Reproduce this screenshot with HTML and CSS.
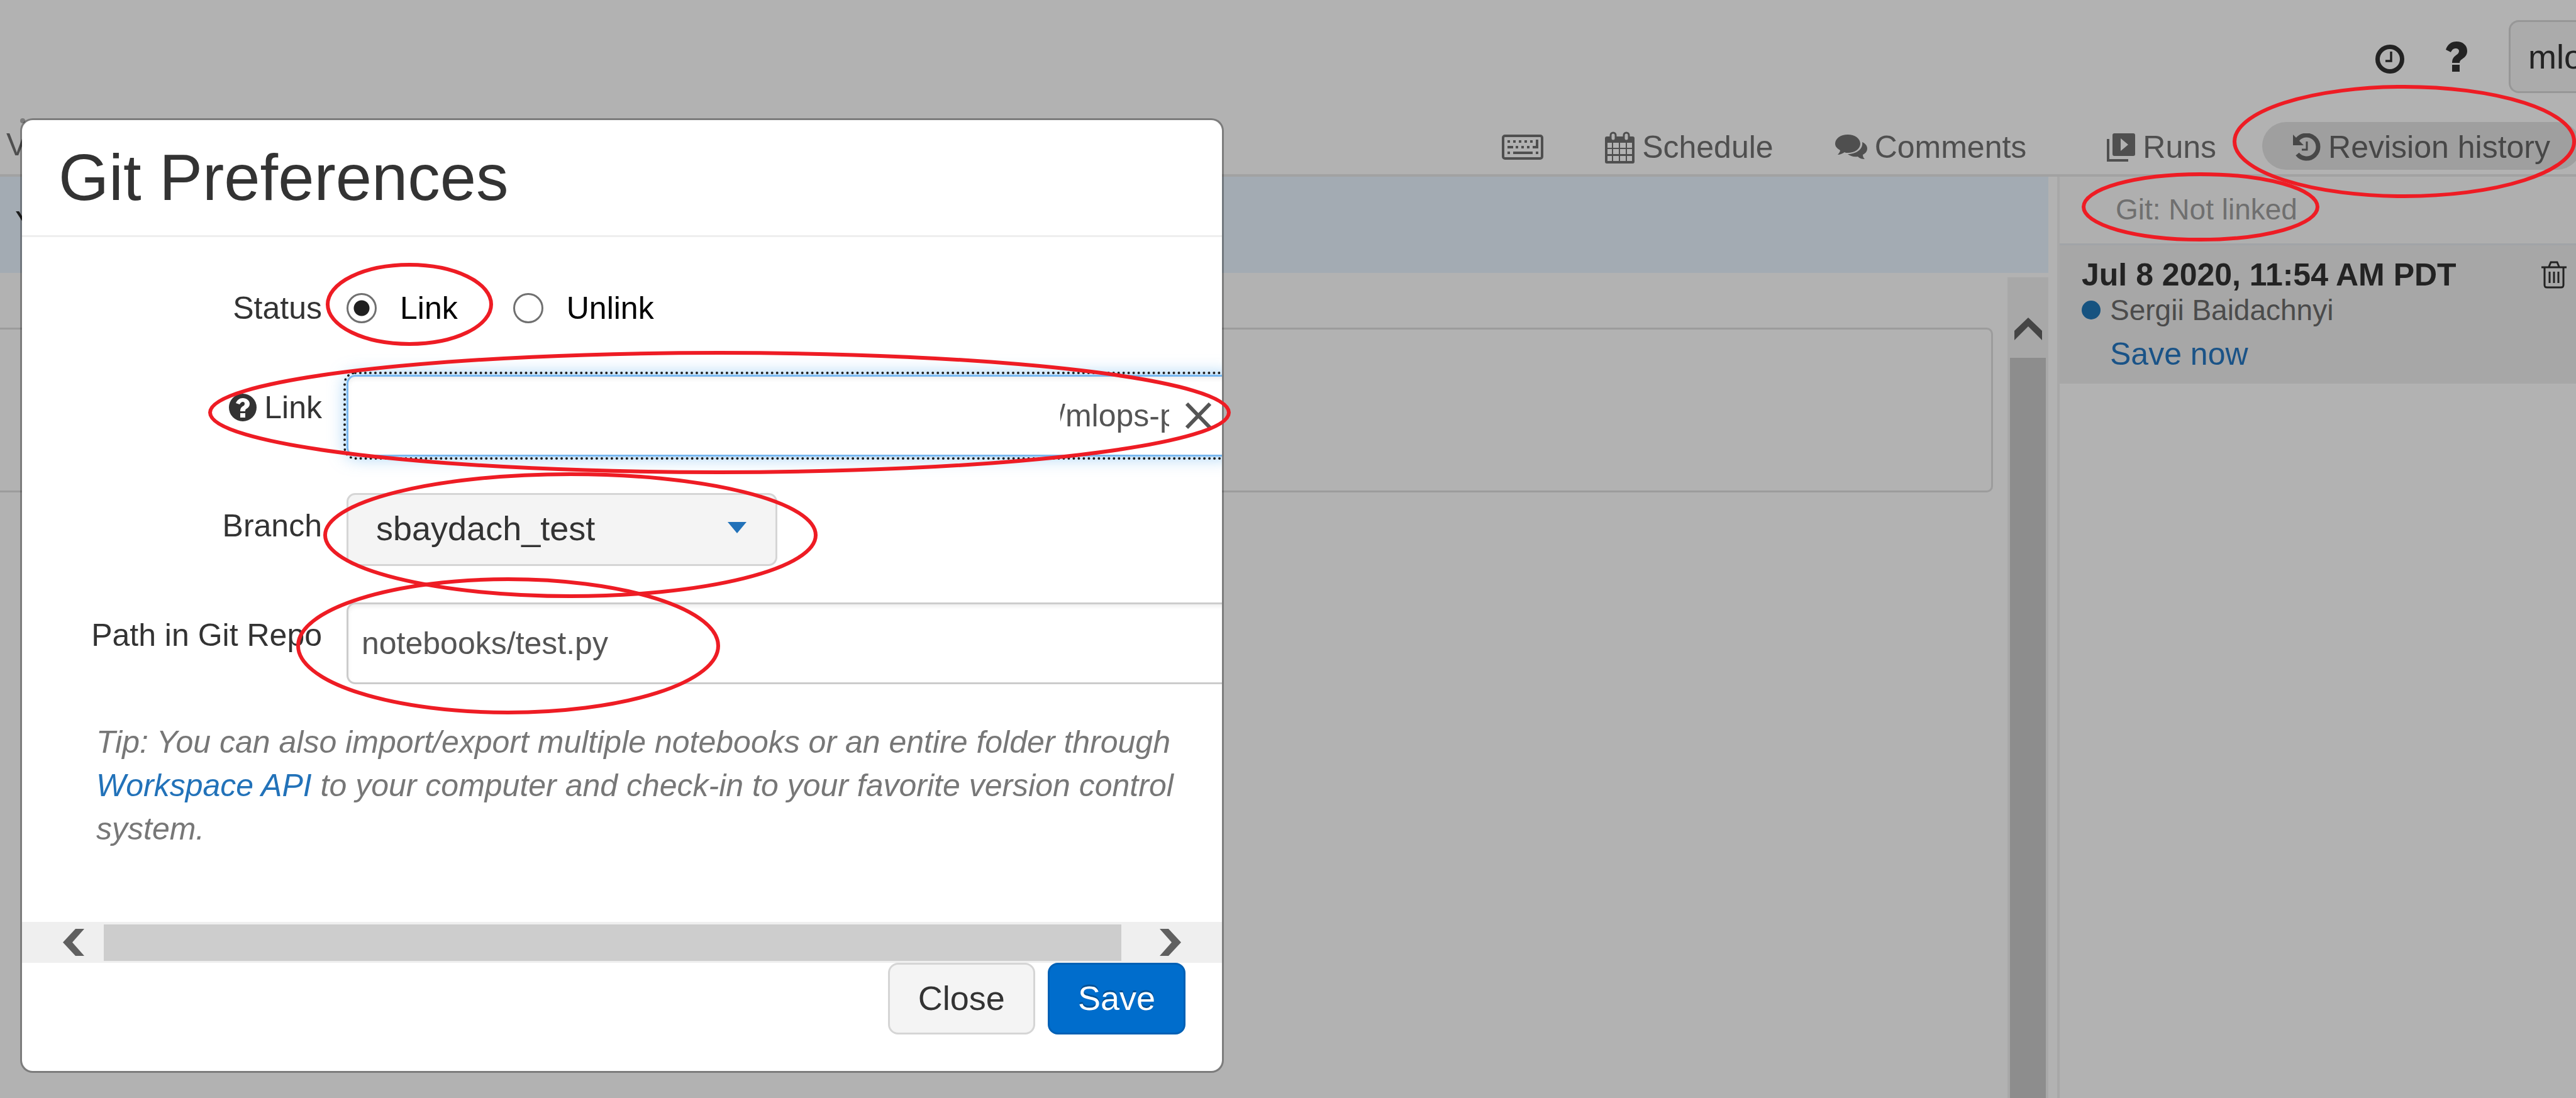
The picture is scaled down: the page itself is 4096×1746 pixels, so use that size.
FILE: index.html
```html
<!DOCTYPE html>
<html lang="en">
<head>
<meta charset="utf-8">
<title>Git Preferences</title>
<link rel="stylesheet" href="styles.css">
</head>
<body>
<div class="page">
  <header class="topbar">
    <svg class="icon-clock" viewBox="0 0 46 46" aria-hidden="true">
      <circle cx="23" cy="23" r="19.500" fill="none" stroke="currentColor" stroke-width="7"/>
      <path d="M25 11v15h-9" fill="none" stroke="currentColor" stroke-width="3.500"/>
    </svg>
    <svg class="icon-help" viewBox="0 0 34 48" aria-hidden="true">
      <path d="M0 13C3 4 9 0 17 0c10 0 17 6 17 15 0 7-4 10-8 13-3 2-4 3-4 6H10c0-6 2-9 6-12 3-2 5-4 5-7 0-2-2-4-5-4-4 0-6 2-8 6z" fill="currentColor"/>
      <rect x="10" y="37" width="12" height="11" fill="currentColor"/>
    </svg>
    <button class="workspace" type="button">mlo</button>
  </header>

  <nav class="toolbar">
    <a class="tool tool-view" href="#">V</a>
    <a class="tool" href="#" aria-label="Keyboard shortcuts">
      <svg class="icon-keyboard" viewBox="0 0 66 40" aria-hidden="true">
        <rect x="2" y="2" width="62" height="36" rx="3" fill="none" stroke="currentColor" stroke-width="4"/>
        <path d="M9 11h4m5 0h4m5 0h4m5 0h4m5 0h4M9 20h9m4 0h4m5 0h4m5 0h4M9 29h4m5 0h31m5 0h4" fill="none" stroke="currentColor" stroke-width="4"/>
        <path d="M56 8v12h-7" fill="none" stroke="currentColor" stroke-width="4"/>
      </svg>
    </a>
    <a class="tool" href="#">
      <svg class="icon-calendar" viewBox="0 0 47 51" aria-hidden="true">
        <path d="M3 8h41a3 3 0 0 1 3 3v37a3 3 0 0 1-3 3H3a3 3 0 0 1-3-3V11a3 3 0 0 1 3-3zM4 18v8h7v-8zm9 0v8h9v-8zm11 0v8h9v-8zm11 0v8h8v-8zM4 28v8h7v-8zm9 0v8h9v-8zm11 0v8h9v-8zm11 0v8h8v-8zM4 39v8h7v-8zm9 0v8h9v-8zm11 0v8h9v-8zm11 0v8h8v-8z" fill="currentColor" fill-rule="evenodd"/>
        <rect x="9" y="2" width="8" height="13" rx="4" class="ring"/>
        <rect x="30" y="2" width="8" height="13" rx="4" class="ring"/>
      </svg>
      Schedule
    </a>
    <a class="tool tool-comments" href="#">
      <svg class="icon-comments" viewBox="0 0 51 40" aria-hidden="true">
        <path d="M20 0c11 0 20 6 20 14.500S31 29 20 29c-2 0-4 0-5-1-3 2-7 4-11 4 2-2 4-5 4-7C3 22 0 19 0 14.500 0 6 9 0 20 0z" fill="currentColor"/>
        <path d="M43 12c5 2 8 6 8 10 0 5-3 8-7 10 0 3 1 5 3 7-4 0-8-1-11-4-7 1-12-1-16-4 12 0 25-7 23-19z" fill="currentColor"/>
      </svg>
      Comments
    </a>
    <a class="tool tool-runs" href="#">
      <svg class="icon-runs" viewBox="0 0 45 45" aria-hidden="true">
        <path d="M2 9v34h32" fill="none" stroke="currentColor" stroke-width="4"/>
        <path d="M12 0h30a3 3 0 0 1 3 3v30a3 3 0 0 1-3 3H12a3 3 0 0 1-3-3V3a3 3 0 0 1 3-3zm10 8v20l12-10z" fill="currentColor" fill-rule="evenodd"/>
      </svg>
      Runs
    </a>
    <a class="tool tool-active" href="#">
      <svg class="icon-history" viewBox="0 0 44 44" aria-hidden="true">
        <path d="M7 10A18.500 18.500 0 1 1 7 33" fill="none" stroke="currentColor" stroke-width="7"/>
        <path d="M0 2v17h17z" fill="currentColor"/>
        <path d="M22 13v13h-8" fill="none" stroke="currentColor" stroke-width="3"/>
      </svg>
      Revision history
    </a>
  </nav>

  <div class="content">
    <main class="notebook">
      <div class="banner">Y</div>
      <div class="editor">
        <div class="cells"><div class="cell"></div></div>
        <div class="vscroll">
          <svg class="icon-up" viewBox="0 0 44 36" aria-hidden="true"><path d="M22 0l22 21v15L22 14 0 36V21z" fill="currentColor"/></svg>
          <div class="vthumb"></div>
        </div>
      </div>
    </main>

    <aside class="revisions">
      <a class="git-status" href="#">Git: Not linked</a>
      <section class="revision">
        <div class="revision-head">
          <strong class="revision-date">Jul 8 2020, 11:54 AM PDT</strong>
          <svg class="icon-trash" viewBox="0 0 40 44" aria-hidden="true">
            <path d="M0 10h40M12 9l3-7h10l3 7M5 10v28c0 3 1 4 4 4h22c3 0 4-1 4-4V10M13 17v18M20 17v18M27 17v18" fill="none" stroke="currentColor" stroke-width="3"/>
          </svg>
        </div>
        <div class="revision-author"><span class="dot"></span>Sergii Baidachnyi</div>
        <a class="save-now" href="#">Save now</a>
      </section>
    </aside>
  </div>
</div>

<span class="handle"></span>
<form class="modal" role="dialog" aria-labelledby="modal-title">
  <header class="modal-header"><h1 class="modal-title" id="modal-title">Git Preferences</h1></header>
  <div class="modal-body">
    <div class="row row-status" role="radiogroup" aria-labelledby="status-label">
      <span class="label" id="status-label">Status</span>
      <div class="radios">
        <label class="radio-label"><input class="radio" type="radio" name="status" checked>Link</label>
        <label class="radio-label"><input class="radio" type="radio" name="status">Unlink</label>
      </div>
    </div>
    <div class="row">
      <label class="label" for="link">
        <svg class="icon-question" viewBox="0 0 44 44" aria-hidden="true">
          <circle cx="22" cy="22" r="22" fill="currentColor"/>
          <path d="M11 15c2-5 6-8 11-8 6 0 11 4 11 9 0 4-2 6-5 8-2 1-2 2-2 4h-8c0-4 1-6 4-8 2-1 3-2 3-4s-1-3-3-3-3 1-5 4z" fill="#fff"/>
          <rect x="18" y="31" width="8" height="7" fill="#fff"/>
        </svg>
        Link
      </label>
      <div class="field field-focus">
        <input class="field-input" id="link" type="text" value="/mlops-p">
        <button class="clear" type="button" aria-label="Clear">
          <svg class="icon-x" viewBox="0 0 43 42" aria-hidden="true"><path d="M3 2l37 38M40 2L3 40" fill="none" stroke="currentColor" stroke-width="6"/></svg>
        </button>
      </div>
    </div>
    <div class="row">
      <label class="label" for="branch">Branch</label>
      <div class="select-wrap">
        <select class="select" id="branch"><option>sbaydach_test</option></select>
        <svg class="icon-caret" viewBox="0 0 30 18" aria-hidden="true"><path d="M0 0h30L15 18z" fill="currentColor"/></svg>
      </div>
    </div>
    <div class="row">
      <label class="label" for="path">Path in Git Repo</label>
      <input class="field field-path" id="path" type="text" value="notebooks/test.py">
    </div>
    <p class="tip">Tip: You can also import/export multiple notebooks or an entire folder through <a class="tip-link" href="#">Workspace API</a> to your computer and check-in to your favorite version control system.</p>
  </div>
  <div class="hscroll">
    <svg class="icon-side" viewBox="0 0 34 43" aria-hidden="true"><path d="M20 0h14L15 21.500 34 43H20L0 21.500z" fill="currentColor"/></svg>
    <div class="hthumb"></div>
    <svg class="icon-side" viewBox="0 0 34 43" aria-hidden="true"><path d="M14 0H0l19 21.500L0 43h14l20-21.500z" fill="currentColor"/></svg>
  </div>
  <footer class="modal-footer">
    <button class="btn" type="button">Close</button>
    <button class="btn btn-primary" type="button">Save</button>
  </footer>
</form>

<svg class="annotations" viewBox="0 0 4096 1746" aria-hidden="true">
  <g fill="none" stroke="#ee1c24" stroke-width="6">
    <ellipse cx="651" cy="484" rx="130" ry="63"/>
    <ellipse cx="1144" cy="656" rx="810" ry="95"/>
    <ellipse cx="907" cy="851" rx="390" ry="97"/>
    <ellipse cx="808" cy="1027" rx="334" ry="106"/>
    <ellipse cx="3823" cy="225" rx="270" ry="87"/>
    <ellipse cx="3499" cy="329" rx="186" ry="52"/>
  </g>
</svg>
</body>
</html>
```
FILE: styles.css
```css
* { box-sizing: border-box; }

body {
  margin: 0;
  background: #b2b2b2;
  color: #333;
  font: 50px/60px "Liberation Sans", Arial, sans-serif;
}

a { text-decoration: none; }
svg { display: block; flex: none; }

.page {
  position: relative;
  display: flex;
  flex-direction: column;
  min-height: 100vh;
  overflow: hidden;
}

/* Top bar */
.topbar {
  display: flex;
  justify-content: flex-end;
  align-items: center;
  gap: 66px;
  padding-top: 32px;
  color: #232323;
}
.icon-clock { width: 46px; height: 46px; margin-top: 8px; }
.icon-help { width: 34px; height: 48px; }
.workspace {
  width: 107px;
  height: 116px;
  padding: 0 0 0 28px;
  overflow: hidden;
  border: 3px solid #979797;
  border-right: 0;
  border-radius: 16px 0 0 16px;
  background: #ababab;
  color: #232323;
  font: 54px/60px "Liberation Sans", Arial, sans-serif;
  text-align: left;
  white-space: nowrap;
}

/* Notebook toolbar */
.toolbar {
  display: flex;
  justify-content: flex-end;
  padding: 46px 0 7px;
  margin-right: -8px;
}
.tool {
  display: flex;
  align-items: center;
  gap: 12px;
  height: 76px;
  padding: 4px 49px 0;
  color: #4f4f4f;
  line-height: 72px;
  white-space: nowrap;
}
.tool-view { margin-right: auto; padding: 0 10px 4px; }
.tool-comments { margin-right: 30px; }
.tool-runs { margin-right: 24px; }
.tool-active { border-radius: 38px; background: #9f9f9f; color: #474747; }
.icon-keyboard { width: 66px; height: 40px; }
.icon-calendar { width: 47px; height: 51px; }
.icon-comments { width: 51px; height: 40px; }
.icon-runs { width: 45px; height: 45px; }
.icon-history { width: 44px; height: 44px; }
.ring { fill: #b2b2b2; stroke: currentColor; stroke-width: 3; }

/* Notebook and side panel */
.content {
  display: flex;
  flex: 1;
  gap: 14px;
  border-top: 4px solid #a2a2a2;
}
.notebook { display: flex; flex: 1; flex-direction: column; }
.banner {
  height: 153px;
  padding: 43px 24px;
  background: #a3abb3;
  color: #1c1c1c;
}
.editor { display: flex; flex: 1; }
.cells { flex: 1; padding: 87px 23px 0 0; }
.cell {
  height: 262px;
  border: 3px solid #9c9c9c;
  border-left: 0;
  border-radius: 0 10px 10px 0;
}
.vscroll {
  display: flex;
  flex-direction: column;
  align-items: center;
  gap: 28px;
  width: 65px;
  margin-top: 7px;
  padding-top: 64px;
  background: #a8a8a8;
  color: #454545;
}
.icon-up { width: 44px; height: 36px; }
.vthumb { flex: 1; width: 57px; background: #8d8d8d; }

.revisions { width: 825px; border-left: 4px solid #a8a8a8; }
.git-status {
  display: block;
  padding: 22px 89px 24px;
  border-bottom: 3px solid #a1a4a7;
  background: #afafaf;
  color: #6f6f6f;
  font-size: 46px;
}
.revision { padding: 17px 15px 17px 35px; background: #a7a7a7; }
.revision-head { display: flex; justify-content: space-between; align-items: center; color: #232323; }
.icon-trash { width: 40px; height: 44px; }
.revision-author {
  display: flex;
  align-items: center;
  gap: 15px;
  margin-bottom: 14px;
  color: #4b4b4b;
  font-size: 46px;
  line-height: 52px;
}
.dot { width: 30px; height: 30px; border-radius: 50%; background: #165380; }
.save-now { display: block; margin-left: 45px; color: #1a5387; }

/* Dialog */
.handle {
  position: absolute;
  top: 188px;
  left: 32px;
  width: 8px;
  height: 8px;
  border-radius: 50%;
  background: #7c7c7c;
}
.modal {
  position: absolute;
  top: 188px;
  left: 32px;
  width: 1914px;
  overflow: hidden;
  border: 3px solid #0000004d;
  border-radius: 20px;
  background: #fff;
  background-clip: padding-box;
}
.modal-header { padding: 32px 58px 31px; border-bottom: 3px solid #eee; }
.modal-title { margin: 0; font-size: 103px; font-weight: 400; line-height: 120px; }
.modal-body { padding: 83px 0 113px; overflow: hidden; }
.row {
  display: grid;
  grid-template-columns: 477px 1fr;
  column-gap: 39px;
  margin-bottom: 58px;
}
.row-status { margin-bottom: 76px; }
.label {
  display: flex;
  justify-content: flex-end;
  align-items: center;
  align-self: start;
  gap: 12px;
  padding-top: 22px;
}
.row-status .label { padding-top: 0; }
.icon-question { width: 44px; height: 44px; }

.radios { display: flex; gap: 88px; }
.radio-label { display: flex; align-items: center; gap: 37px; color: #000; }
.radio {
  width: 48px;
  height: 48px;
  margin: 0;
  border: 3px solid #707070;
  border-radius: 50%;
  appearance: none;
  background: #fff;
}
.radio:checked { background: radial-gradient(circle, #202020 12px, #fff 13px); }

.field {
  display: flex;
  align-items: center;
  height: 130px;
  margin-right: -20px;
  padding: 0 21px;
  border: 3px solid #ccc;
  border-radius: 14px;
  background: #fff;
  box-shadow: inset 0 4px 6px #0001;
  color: #555;
  font: 50px/60px "Liberation Sans", Arial, sans-serif;
}
.field-focus {
  justify-content: flex-end;
  padding-right: 33px;
  border-color: #7ab8f0;
  outline: 4px dotted #1c1c1c;
  outline-offset: 1px;
  box-shadow: inset 0 4px 6px #0001, 0 0 28px #52a8ec99;
}
.field-input {
  width: 173px;
  padding: 0;
  border: 0;
  outline: 0;
  background: none;
  color: #555;
  font: 50px/60px "Liberation Sans", Arial, sans-serif;
  text-indent: -6px;
}
.clear { margin-left: 25px; padding: 0; border: 0; background: none; color: #555; }
.icon-x { width: 43px; height: 42px; }

.select-wrap { position: relative; width: 685px; }
.select {
  display: block;
  width: 100%;
  height: 116px;
  padding: 0 44px 4px;
  border: 3px solid #d5d5d5;
  border-radius: 14px;
  appearance: none;
  background: #f4f4f4;
  color: #333;
  font: 54px/60px "Liberation Sans", Arial, sans-serif;
}
.icon-caret {
  position: absolute;
  top: 46px;
  right: 49px;
  width: 30px;
  height: 18px;
  color: #2272b9;
}

.tip { margin: 0 70px 0 118px; color: #777; font-style: italic; line-height: 69px; }
.tip-link { color: #2272b9; }

.hscroll {
  display: flex;
  align-items: center;
  justify-content: space-between;
  height: 65px;
  padding: 0 65px;
  background: #efefef;
  color: #606060;
}
.icon-side { width: 34px; height: 43px; }
.hthumb { flex: 1; height: 58px; margin: 0 61px 0 31px; background: #cdcdcd; }

.modal-footer { display: flex; justify-content: flex-end; gap: 20px; padding: 0 58px 58px; }
.btn {
  height: 114px;
  padding: 0 45px 3px;
  border: 3px solid #d5d5d5;
  border-radius: 16px;
  background: #f4f4f4;
  color: #333;
  font: 54px/60px "Liberation Sans", Arial, sans-serif;
}
.btn-primary {
  border-color: #0060b5;
  background: #006dcc;
  color: #fff;
  text-shadow: 0 -3px 0 #0004;
}

/* Highlight rings over the whole page */
.annotations {
  position: absolute;
  top: 0;
  left: 0;
  width: 100%;
  pointer-events: none;
}
```
